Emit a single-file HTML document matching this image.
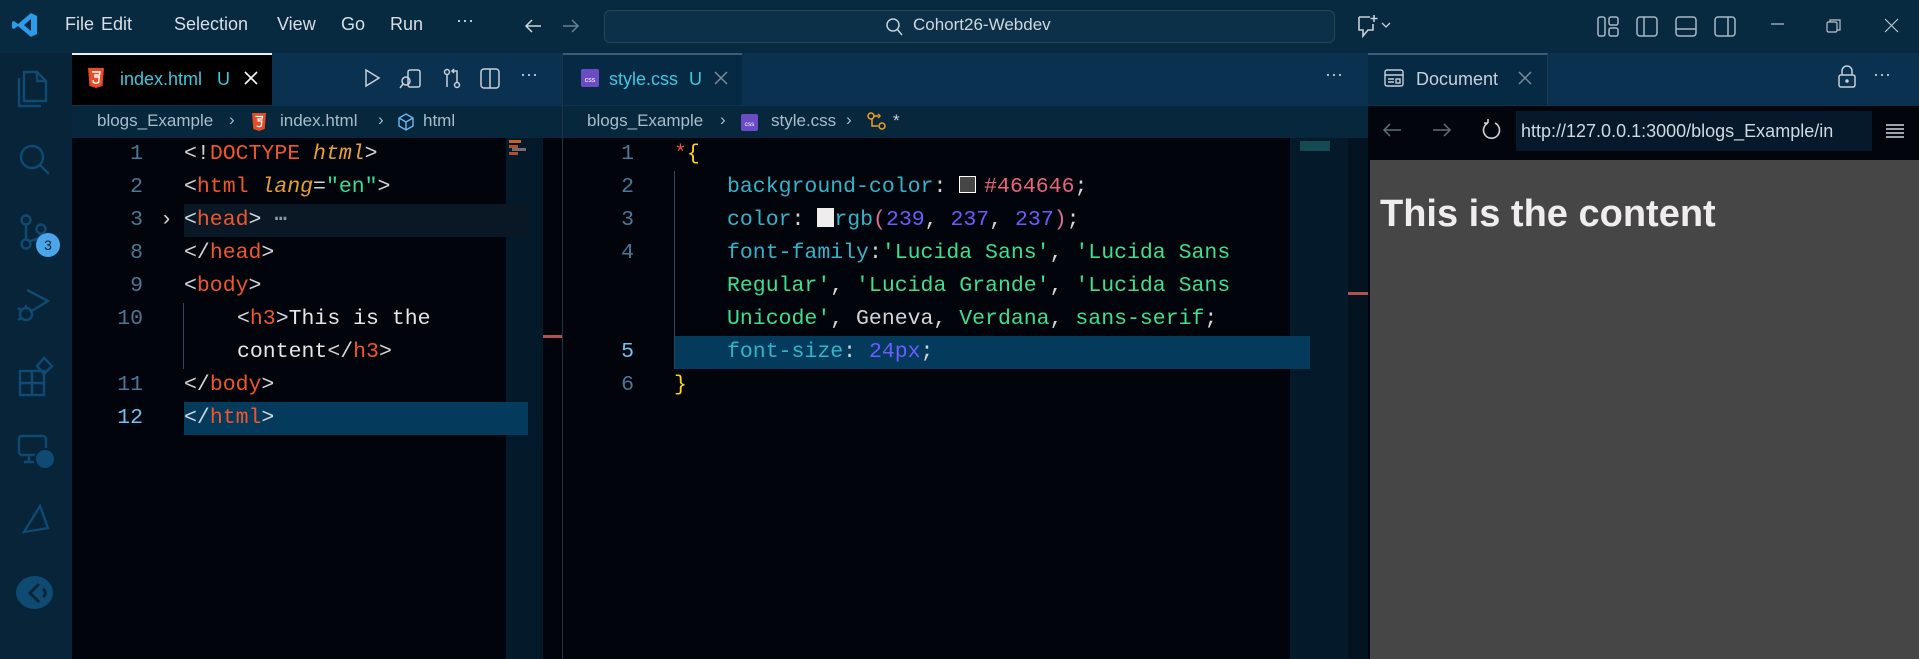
<!DOCTYPE html>
<html><head><meta charset="utf-8"><style>
*{margin:0;padding:0;box-sizing:border-box}
body{width:1919px;height:659px;overflow:hidden;background:#02040c;font-family:"Liberation Sans",sans-serif;position:relative;color:#cdd6e0}
.a{position:absolute}
.t{position:absolute;white-space:pre}
.mono{font-family:"Liberation Mono",monospace;font-size:21.5px;line-height:33px}
.ln{position:absolute;color:#4a7896;text-align:right;width:40px}
.tag{color:#f0562c}.br{color:#d0d6dc}.attr{color:#e8a030;font-style:italic}.str{color:#3ddc97}.tx{color:#e6e6e6}
.prop{color:#35b4c9}.cs{color:#3de08f}.num{color:#6b5cff}.hex{color:#e8647c}.yel{color:#ffd21c}
svg{position:absolute;overflow:visible}
</style></head><body>
<!-- title bar -->
<div class="a" style="left:0;top:0;width:1919px;height:53px;background:#072a40"></div>
<svg style="left:12px;top:12px" width="26" height="26" viewBox="0 0 26 26"><path d="M19 1 L25 4 V22 L19 25 L6 14 L2 17 L0 16 V10 L2 9 L6 12 Z M19 7 L12 13 L19 19Z" fill="#2d9be8"/></svg>
<div class="t" style="left:65px;top:14px;font-size:18px;color:#d8dee4">File</div>
<div class="t" style="left:101px;top:14px;font-size:18px;color:#d8dee4">Edit</div>
<div class="t" style="left:174px;top:14px;font-size:18px;color:#d8dee4">Selection</div>
<div class="t" style="left:277px;top:14px;font-size:18px;color:#d8dee4">View</div>
<div class="t" style="left:341px;top:14px;font-size:18px;color:#d8dee4">Go</div>
<div class="t" style="left:390px;top:14px;font-size:18px;color:#d8dee4">Run</div>
<div class="t" style="left:456px;top:10px;font-size:18px;color:#d8dee4">···</div>
<svg style="left:524px;top:18px" width="18" height="16"><path d="M17 8H2M8 2L2 8L8 14" stroke="#d0d6dc" stroke-width="1.5" fill="none"/></svg>
<svg style="left:562px;top:18px" width="18" height="16"><path d="M1 8H16M10 2L16 8L10 14" stroke="#6a7f90" stroke-width="1.5" fill="none"/></svg>
<div class="a" style="left:604px;top:10px;width:731px;height:33px;border:1px solid #24455c;border-radius:6px;background:#0b3048"></div>
<svg style="left:885px;top:18px" width="18" height="18"><circle cx="8" cy="7" r="6" stroke="#c8d0d8" stroke-width="1.5" fill="none"/><path d="M12 11L17 17" stroke="#c8d0d8" stroke-width="1.5"/></svg>
<div class="t" style="left:913px;top:15px;font-size:17px;color:#d0d6dc">Cohort26-Webdev</div>
<svg style="left:1356px;top:14px" width="40" height="24"><path d="M3 3H14M3 3V16H7V22L12 16H17V10" stroke="#c8d0d8" stroke-width="1.6" fill="none"/><path d="M18 1V8M14.5 4.5H21.5" stroke="#c8d0d8" stroke-width="1.6"/><path d="M26 9L30 13L34 9" stroke="#c8d0d8" stroke-width="1.3" fill="none"/></svg>
<svg style="left:1597px;top:16px" width="150" height="22" fill="none" stroke="#a8b8c4" stroke-width="1.5">
<rect x="1" y="1" width="7" height="19" rx="2"/><rect x="12" y="1" width="9" height="8" rx="2"/><rect x="12" y="12" width="9" height="8" rx="2"/>
<rect x="40" y="1" width="20" height="19" rx="3"/><path d="M47 1V20"/>
<rect x="79" y="1" width="20" height="19" rx="3"/><path d="M79 13H99"/>
<rect x="118" y="1" width="20" height="19" rx="3"/><path d="M131 1V20"/>
</svg>
<svg style="left:1771px;top:18px" width="140" height="16" fill="none" stroke="#b8c4cc" stroke-width="1.2"><path d="M0 6H13"/><rect x="56" y="4" width="10" height="10" rx="1.5"/><path d="M59 4V2H69V12H66"/><path d="M114 1L127 14M127 1L114 14"/></svg>

<!-- activity bar -->
<div class="a" style="left:0;top:53px;width:72px;height:606px;background:#072438"></div>
<svg style="left:0;top:0" width="72" height="659" fill="none" stroke="#0e4a72" stroke-width="2.4">
<path d="M24 72H37L46 81V101H24Z M37 72V81H46 M19 78V106H41"/>
<circle cx="32" cy="157" r="11"/><path d="M40 165L49 174"/>
<circle cx="26" cy="220" r="4.5"/><circle cx="26" cy="244" r="4.5"/><circle cx="41" cy="229" r="4.5"/><path d="M26 225V239M41 234C41 240 30 240 28 242"/>
<path d="M27 290L48 301L30 312"/><circle cx="26" cy="314" r="6"/><path d="M18 308L21 310M18 320L21 318M26 307V305"/>
<rect x="20" y="371" width="12" height="12"/><rect x="32" y="371" width="12" height="12"/><rect x="20" y="383" width="12" height="12"/><rect x="32" y="383" width="12" height="12"/><path d="M37 366L44 358L52 366L44 374Z"/>
<rect x="19" y="436" width="27" height="19" rx="3"/><path d="M24 462H34M29 455V462"/>
<path d="M40 506L24 532L48 528Z"/>
</svg>
<div class="a" style="left:34px;top:448px;width:22px;height:22px;border-radius:50%;background:#0e4a72;border:2px solid #072438"></div>
<div class="a" style="left:36px;top:233px;width:24px;height:24px;border-radius:50%;background:#4aa6e8;color:#0b2236;font-size:14px;text-align:center;line-height:24px">3</div>
<div class="a" style="left:16px;top:576px;width:37px;height:33px;border-radius:50%;background:#0e4a72"></div>
<svg style="left:24px;top:581px" width="26" height="22"><path d="M15 3L6 12L15 21M19 8C22 10 22 14 19 16" stroke="#072438" stroke-width="3" fill="none"/></svg>

<!-- group 1 -->
<div class="a" style="left:72px;top:53px;width:491px;height:53px;background:#0a3150"></div>
<div class="a" style="left:72px;top:53px;width:200px;height:52px;background:#000;border-top:2px solid #e8eef4"></div>
<svg style="left:88px;top:68px" width="16" height="20"><path d="M0 0H16L14.5 18L8 20L1.5 18Z" fill="#e44d26"/><path d="M4 4H12L11.5 7H7V9H11.3L10.7 14.5L8 15.3L5.3 14.5L5.1 12" stroke="#fff" stroke-width="1.4" fill="none"/></svg>
<div class="t" style="left:120px;top:69px;font-size:18px;color:#3ec8e0">index.html</div>
<div class="t" style="left:217px;top:69px;font-size:18px;color:#3ec8e0">U</div>
<svg style="left:244px;top:71px" width="14" height="14"><path d="M1 1L13 13M13 1L1 13" stroke="#fff" stroke-width="1.6"/></svg>
<svg style="left:364px;top:68px" width="180" height="22" fill="none" stroke="#c8d0d8" stroke-width="1.5">
<path d="M2 2L15 10L2 18Z"/>
<rect x="44" y="2" width="12" height="17" rx="2"/><circle cx="42" cy="13" r="4"/><path d="M39 16L36 20"/>
<circle cx="83" cy="4" r="2.5"/><circle cx="93" cy="17" r="2.5"/><path d="M83 7V19M93 14V3H88M90 1L88 3L90 5"/>
<rect x="117" y="1" width="18" height="19" rx="3"/><path d="M126 1V20"/>
</svg>
<div class="t" style="left:520px;top:64px;font-size:18px;color:#c8d0d8">···</div>
<div class="a" style="left:72px;top:106px;width:491px;height:32px;background:#07273d"></div>
<div class="t" style="left:97px;top:111px;font-size:17px;color:#a9bccb">blogs_Example</div>
<div class="t" style="left:229px;top:110px;font-size:17px;color:#a9bccb">›</div>
<svg style="left:252px;top:113px" width="14" height="18"><path d="M0 0H14L12.7 16L7 18L1.3 16Z" fill="#e44d26"/><path d="M3.5 3.5H10.5L10 6H6V8H9.8L9.3 13L7 13.7L4.7 13" stroke="#fff" stroke-width="1.2" fill="none"/></svg>
<div class="t" style="left:280px;top:111px;font-size:17px;color:#a9bccb">index.html</div>
<div class="t" style="left:378px;top:110px;font-size:17px;color:#a9bccb">›</div>
<svg style="left:397px;top:113px" width="18" height="18"><path d="M9 1L16 5V13L9 17L2 13V5Z M2 5L9 9L16 5M9 9V17" stroke="#6cb8f0" stroke-width="1.4" fill="none"/></svg>
<div class="t" style="left:423px;top:111px;font-size:17px;color:#a9bccb">html</div>
<div class="a" style="left:506px;top:138px;width:37px;height:521px;background:#041a2a"></div>
<div class="a" style="left:509px;top:140px;width:12px;height:3px;background:#c4632e"></div>
<div class="a" style="left:509px;top:145px;width:9px;height:3px;background:#b05030"></div>
<div class="a" style="left:512px;top:148px;width:14px;height:3px;background:#7a6a70"></div>
<div class="a" style="left:509px;top:152px;width:9px;height:3px;background:#b05030"></div>
<div class="a" style="left:543px;top:335px;width:20px;height:3px;background:#b05050"></div>
<div class="a" style="left:562px;top:53px;width:1px;height:606px;background:#1c3446"></div>

<div class="a" style="left:184px;top:204px;width:344px;height:33px;background:#0a1826"></div>
<div class="a" style="left:184px;top:402px;width:344px;height:33px;background:#043a5c"></div>
<div class="a" style="left:183px;top:303px;width:1px;height:66px;background:#2a4a62"></div>
<div class="mono">
<div class="ln" style="left:103px;top:138px">1</div>
<div class="ln" style="left:103px;top:171px">2</div>
<div class="ln" style="left:103px;top:204px">3</div>
<div class="ln" style="left:103px;top:237px">8</div>
<div class="ln" style="left:103px;top:270px">9</div>
<div class="ln" style="left:103px;top:303px">10</div>
<div class="ln" style="left:103px;top:369px">11</div>
<div class="ln" style="left:103px;top:402px;color:#6cc4f4">12</div>
<div class="t" style="left:160px;top:204px;color:#c8d0d8">›</div>
<div class="t" style="left:184px;top:138px"><span class="br">&lt;!</span><span class="tag">DOCTYPE</span> <span class="attr">html</span><span class="br">&gt;</span></div>
<div class="t" style="left:184px;top:171px"><span class="br">&lt;</span><span class="tag">html</span> <span class="attr">lang</span><span class="br">=</span><span class="str">"en"</span><span class="br">&gt;</span></div>
<div class="t" style="left:184px;top:204px"><span class="br">&lt;</span><span class="tag">head</span><span class="br">&gt;</span><span style="color:#8898a8"> ⋯</span></div>
<div class="t" style="left:184px;top:237px"><span class="br">&lt;/</span><span class="tag">head</span><span class="br">&gt;</span></div>
<div class="t" style="left:184px;top:270px"><span class="br">&lt;</span><span class="tag">body</span><span class="br">&gt;</span></div>
<div class="t" style="left:237px;top:303px"><span class="br">&lt;</span><span class="tag">h3</span><span class="br">&gt;</span><span class="tx">This is the</span></div>
<div class="t" style="left:237px;top:336px"><span class="tx">content</span><span class="br">&lt;/</span><span class="tag">h3</span><span class="br">&gt;</span></div>
<div class="t" style="left:184px;top:369px"><span class="br">&lt;/</span><span class="tag">body</span><span class="br">&gt;</span></div>
<div class="t" style="left:184px;top:402px"><span class="br">&lt;/</span><span class="tag">html</span><span class="br">&gt;</span></div>
</div>

<!-- group 2 -->
<div class="a" style="left:563px;top:53px;width:805px;height:53px;background:#0a3150"></div>
<div class="a" style="left:563px;top:53px;width:179px;height:52px;background:#062a44;border-top:2px solid #3a5e78"></div>
<svg style="left:581px;top:69px" width="18" height="18"><rect width="18" height="18" rx="2" fill="#6c4cc4"/><text x="9" y="13" font-size="7" fill="#fff" text-anchor="middle" font-family="Liberation Sans">css</text></svg>
<div class="t" style="left:609px;top:69px;font-size:18px;color:#3ec8e0">style.css</div>
<div class="t" style="left:689px;top:69px;font-size:18px;color:#3ec8e0">U</div>
<svg style="left:714px;top:71px" width="14" height="14"><path d="M1 1L13 13M13 1L1 13" stroke="#7a8a98" stroke-width="1.5"/></svg>
<div class="t" style="left:1325px;top:64px;font-size:18px;color:#c8d0d8">···</div>
<div class="a" style="left:563px;top:106px;width:805px;height:32px;background:#07273d"></div>
<div class="t" style="left:587px;top:111px;font-size:17px;color:#a9bccb">blogs_Example</div>
<div class="t" style="left:720px;top:110px;font-size:17px;color:#a9bccb">›</div>
<svg style="left:741px;top:114px" width="17" height="17"><rect width="17" height="17" rx="2" fill="#6c4cc4"/><text x="8.5" y="12" font-size="6.5" fill="#fff" text-anchor="middle" font-family="Liberation Sans">css</text></svg>
<div class="t" style="left:771px;top:111px;font-size:17px;color:#a9bccb">style.css</div>
<div class="t" style="left:846px;top:110px;font-size:17px;color:#a9bccb">›</div>
<svg style="left:866px;top:111px" width="22" height="20" fill="none" stroke="#f0a020" stroke-width="1.5"><circle cx="5" cy="5" r="3"/><path d="M8 5H12M12 3L14 5L12 7M6 8V15H12"/><circle cx="16" cy="15" r="3"/></svg>
<div class="t" style="left:893px;top:111px;font-size:17px;color:#c8d0d8">*</div>
<div class="a" style="left:1290px;top:138px;width:58px;height:521px;background:#041a2a"></div>
<div class="a" style="left:1348px;top:138px;width:20px;height:521px;background:#031420"></div>
<div class="a" style="left:1300px;top:141px;width:30px;height:10px;background:#1c5f64;opacity:.7"></div>
<div class="a" style="left:1348px;top:292px;width:20px;height:3px;background:#b05050"></div>
<div class="a" style="left:674px;top:336px;width:636px;height:33px;background:#043a5c"></div>
<div class="a" style="left:674px;top:171px;width:1px;height:198px;background:#2a4a62"></div>
<div class="mono">
<div class="ln" style="left:594px;top:138px">1</div>
<div class="ln" style="left:594px;top:171px">2</div>
<div class="ln" style="left:594px;top:204px">3</div>
<div class="ln" style="left:594px;top:237px">4</div>
<div class="ln" style="left:594px;top:336px;color:#6cc4f4">5</div>
<div class="ln" style="left:594px;top:369px">6</div>
<div class="t" style="left:674px;top:138px"><span style="color:#e8573e">*</span><span class="yel">{</span></div>
<div class="t" style="left:727px;top:171px"><span class="prop">background-color</span><span class="br">: </span><span style="display:inline-block;width:17px;height:17px;background:#464646;border:1.5px solid #fff;vertical-align:-1px"></span> <span class="hex" style="margin-left:-5px">#464646</span><span class="br">;</span></div>
<div class="t" style="left:727px;top:204px"><span class="prop">color</span><span class="br">: </span><span style="display:inline-block;width:17px;height:19px;background:#efeded;vertical-align:-2px"></span><span class="prop">rgb</span><span style="color:#e06c9c">(</span><span class="num">239</span><span class="br">, </span><span class="num">237</span><span class="br">, </span><span class="num">237</span><span style="color:#e06c9c">)</span><span class="br">;</span></div>
<div class="t" style="left:727px;top:237px"><span class="prop">font-family</span><span class="br">:</span><span class="cs">'Lucida Sans'</span><span class="br">, </span><span class="cs">'Lucida Sans</span></div>
<div class="t" style="left:727px;top:270px"><span class="cs">Regular'</span><span class="br">, </span><span class="cs">'Lucida Grande'</span><span class="br">, </span><span class="cs">'Lucida Sans</span></div>
<div class="t" style="left:727px;top:303px"><span class="cs">Unicode'</span><span class="br">, Geneva, </span><span class="cs">Verdana</span><span class="br">, </span><span class="cs">sans-serif</span><span class="br">;</span></div>
<div class="t" style="left:727px;top:336px"><span class="prop">font-size</span><span class="br">: </span><span class="num">24px</span><span class="br">;</span></div>
<div class="t" style="left:674px;top:369px"><span class="yel">}</span></div>
</div>

<!-- group 3 browser -->
<div class="a" style="left:1368px;top:53px;width:551px;height:53px;background:#0a3150"></div>
<div class="a" style="left:1368px;top:53px;width:180px;height:52px;background:#062a44;border-top:2px solid #3a5e78;border-right:1px solid #1c3a52"></div>
<svg style="left:1384px;top:69px" width="20" height="18" fill="none" stroke="#c8d0d8" stroke-width="1.4"><rect x="1" y="1" width="18" height="16" rx="2"/><path d="M1 6H19M4 10H10M4 13H10"/><rect x="12" y="10" width="4" height="4"/></svg>
<div class="t" style="left:1416px;top:69px;font-size:18px;color:#c8d0d8">Document</div>
<svg style="left:1518px;top:71px" width="14" height="14"><path d="M1 1L13 13M13 1L1 13" stroke="#7a8a98" stroke-width="1.5"/></svg>
<svg style="left:1838px;top:65px" width="18" height="24" fill="none" stroke="#c8d0d8" stroke-width="1.5"><path d="M4 10V6A5 5 0 0 1 14 6V10"/><rect x="1" y="10" width="16" height="12" rx="2"/><circle cx="9" cy="16" r="1" fill="#c8d0d8"/></svg>
<div class="t" style="left:1873px;top:64px;font-size:18px;color:#c8d0d8">···</div>
<div class="a" style="left:1368px;top:106px;width:551px;height:54px;background:#02050c"></div>
<svg style="left:1382px;top:122px" width="20" height="16"><path d="M19 8H2M8 2L2 8L8 14" stroke="#5e6e7a" stroke-width="1.5" fill="none"/></svg>
<svg style="left:1432px;top:122px" width="20" height="16"><path d="M1 8H18M12 2L18 8L12 14" stroke="#5e6e7a" stroke-width="1.5" fill="none"/></svg>
<svg style="left:1480px;top:119px" width="22" height="22"><path d="M8 4A8 8 0 1 0 15 4M8 4V0M8 4H4" stroke="#c8d0d8" stroke-width="1.6" fill="none"/></svg>
<div class="a" style="left:1516px;top:111px;width:356px;height:40px;background:#06192a"></div>
<div class="t" style="left:1521px;top:121px;font-size:18px;color:#d0d8e0">http://127.0.0.1:3000/blogs_Example/in</div>
<svg style="left:1886px;top:124px" width="18" height="14"><path d="M0 1H18M0 5H18M0 9H18M0 13H18" stroke="#d0d8e0" stroke-width="1.4"/></svg>
<div class="a" style="left:1370px;top:160px;width:549px;height:499px;background:#464646"></div>
<div class="a" style="left:1368px;top:106px;width:2px;height:553px;background:#02050c"></div>
<div class="t" style="left:1380px;top:193px;font-size:38px;font-weight:bold;color:#efeded">This is the content</div>
</body></html>
